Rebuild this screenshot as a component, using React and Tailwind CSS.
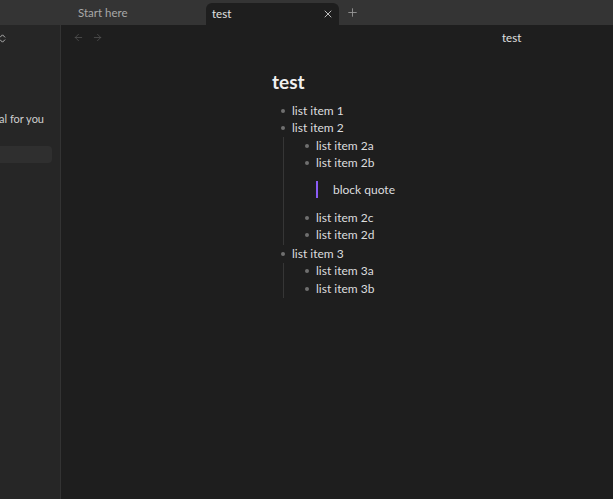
import { ChevronsUpDown, ArrowLeft, ArrowRight, X, Plus } from "lucide-react";

const font = { fontFamily: "Lato, 'Noto Sans', sans-serif" };

const Bullet = () => <span className="w-[4px] h-[4px] rounded-full bg-[#6f6f6f] shrink-0" />;

const Item = ({ children }) => (
  <li className="flex items-center h-[17.5px] gap-[7px]">
    <Bullet />
    <span>{children}</span>
  </li>
);

const Nested = ({ children, tail = 0 }) => (
  <ul className="ml-[2px] border-l border-[#363636] pl-[21px]" style={{ paddingBottom: tail }}>
    {children}
  </ul>
);

export default function App() {
  return (
    <div
      className="w-[613px] h-[499px] flex flex-col bg-[#1e1e1e] overflow-hidden text-[#dcddde]"
      style={font}
    >
      {/* tab bar */}
      <div className="h-[25px] bg-[#343434] flex items-end shrink-0">
        <div className="w-[60px]" />
        <div className="w-[146px] h-[25px] flex items-center pl-[18px] text-[11.5px] text-[#a8a8a8]">
          Start here
        </div>
        <div className="w-[133px] h-[22px] bg-[#1e1e1e] rounded-t-[6px] flex items-center justify-between pl-[6px] pr-[5px] text-[11.5px] text-[#e2e2e2]">
          <span>test</span>
          <X size={12} strokeWidth={1.8} className="text-[#cfcfcf]" />
        </div>
        <div className="h-[25px] flex items-center pl-[7px]">
          <Plus size={13} strokeWidth={1.6} className="text-[#9a9a9a]" />
        </div>
      </div>

      <div className="flex flex-1 min-h-0">
        {/* sidebar */}
        <div className="w-[61px] bg-[#262626] border-r border-[#333333] shrink-0 overflow-hidden">
          <div className="h-[26px] flex items-center -ml-[3px]">
            <ChevronsUpDown size={11} strokeWidth={2} className="text-[#bdbdbd]" />
          </div>
          <div className="mt-[60px] flex justify-end pr-[16px] whitespace-nowrap text-[11px] text-[#cfcfcf]">
            special for you
          </div>
          <div className="mt-[18px] mr-[8px] h-[17px] rounded-r-[4px] bg-[#2f2f2f]" />
        </div>

        {/* main */}
        <div className="flex-1 flex flex-col">
          <div className="h-[25px] flex items-center relative">
            <div className="flex items-center gap-[8px] pl-[12px] text-[#555]">
              <ArrowLeft size={11} strokeWidth={1.6} />
              <ArrowRight size={11} strokeWidth={1.6} />
            </div>
            <span className="absolute left-[441px] text-[11.5px] text-[#e0e0e0]">test</span>
          </div>

          <div className="pl-[211px] pt-[20px] text-[12px]">
            <h1 className="text-[19px] font-bold text-[#f0f0f0] leading-[24px] mb-[8px]">test</h1>
            <ul className="pl-[9px]">
              <Item>list item 1</Item>
              <Item>list item 2</Item>
              <Nested tail={1}>
                <Item>list item 2a</Item>
                <Item>list item 2b</Item>
                <li className="pt-[9px] pb-[11px] pl-[11px]">
                  <div className="border-l-2 border-[#8a5cf5] pl-[15px] h-[17px] flex items-center">
                    block quote
                  </div>
                </li>
                <Item>list item 2c</Item>
                <Item>list item 2d</Item>
              </Nested>
              <Item>list item 3</Item>
              <Nested tail={0}>
                <Item>list item 3a</Item>
                <Item>list item 3b</Item>
              </Nested>
            </ul>
          </div>
        </div>
      </div>
    </div>
  );
}
